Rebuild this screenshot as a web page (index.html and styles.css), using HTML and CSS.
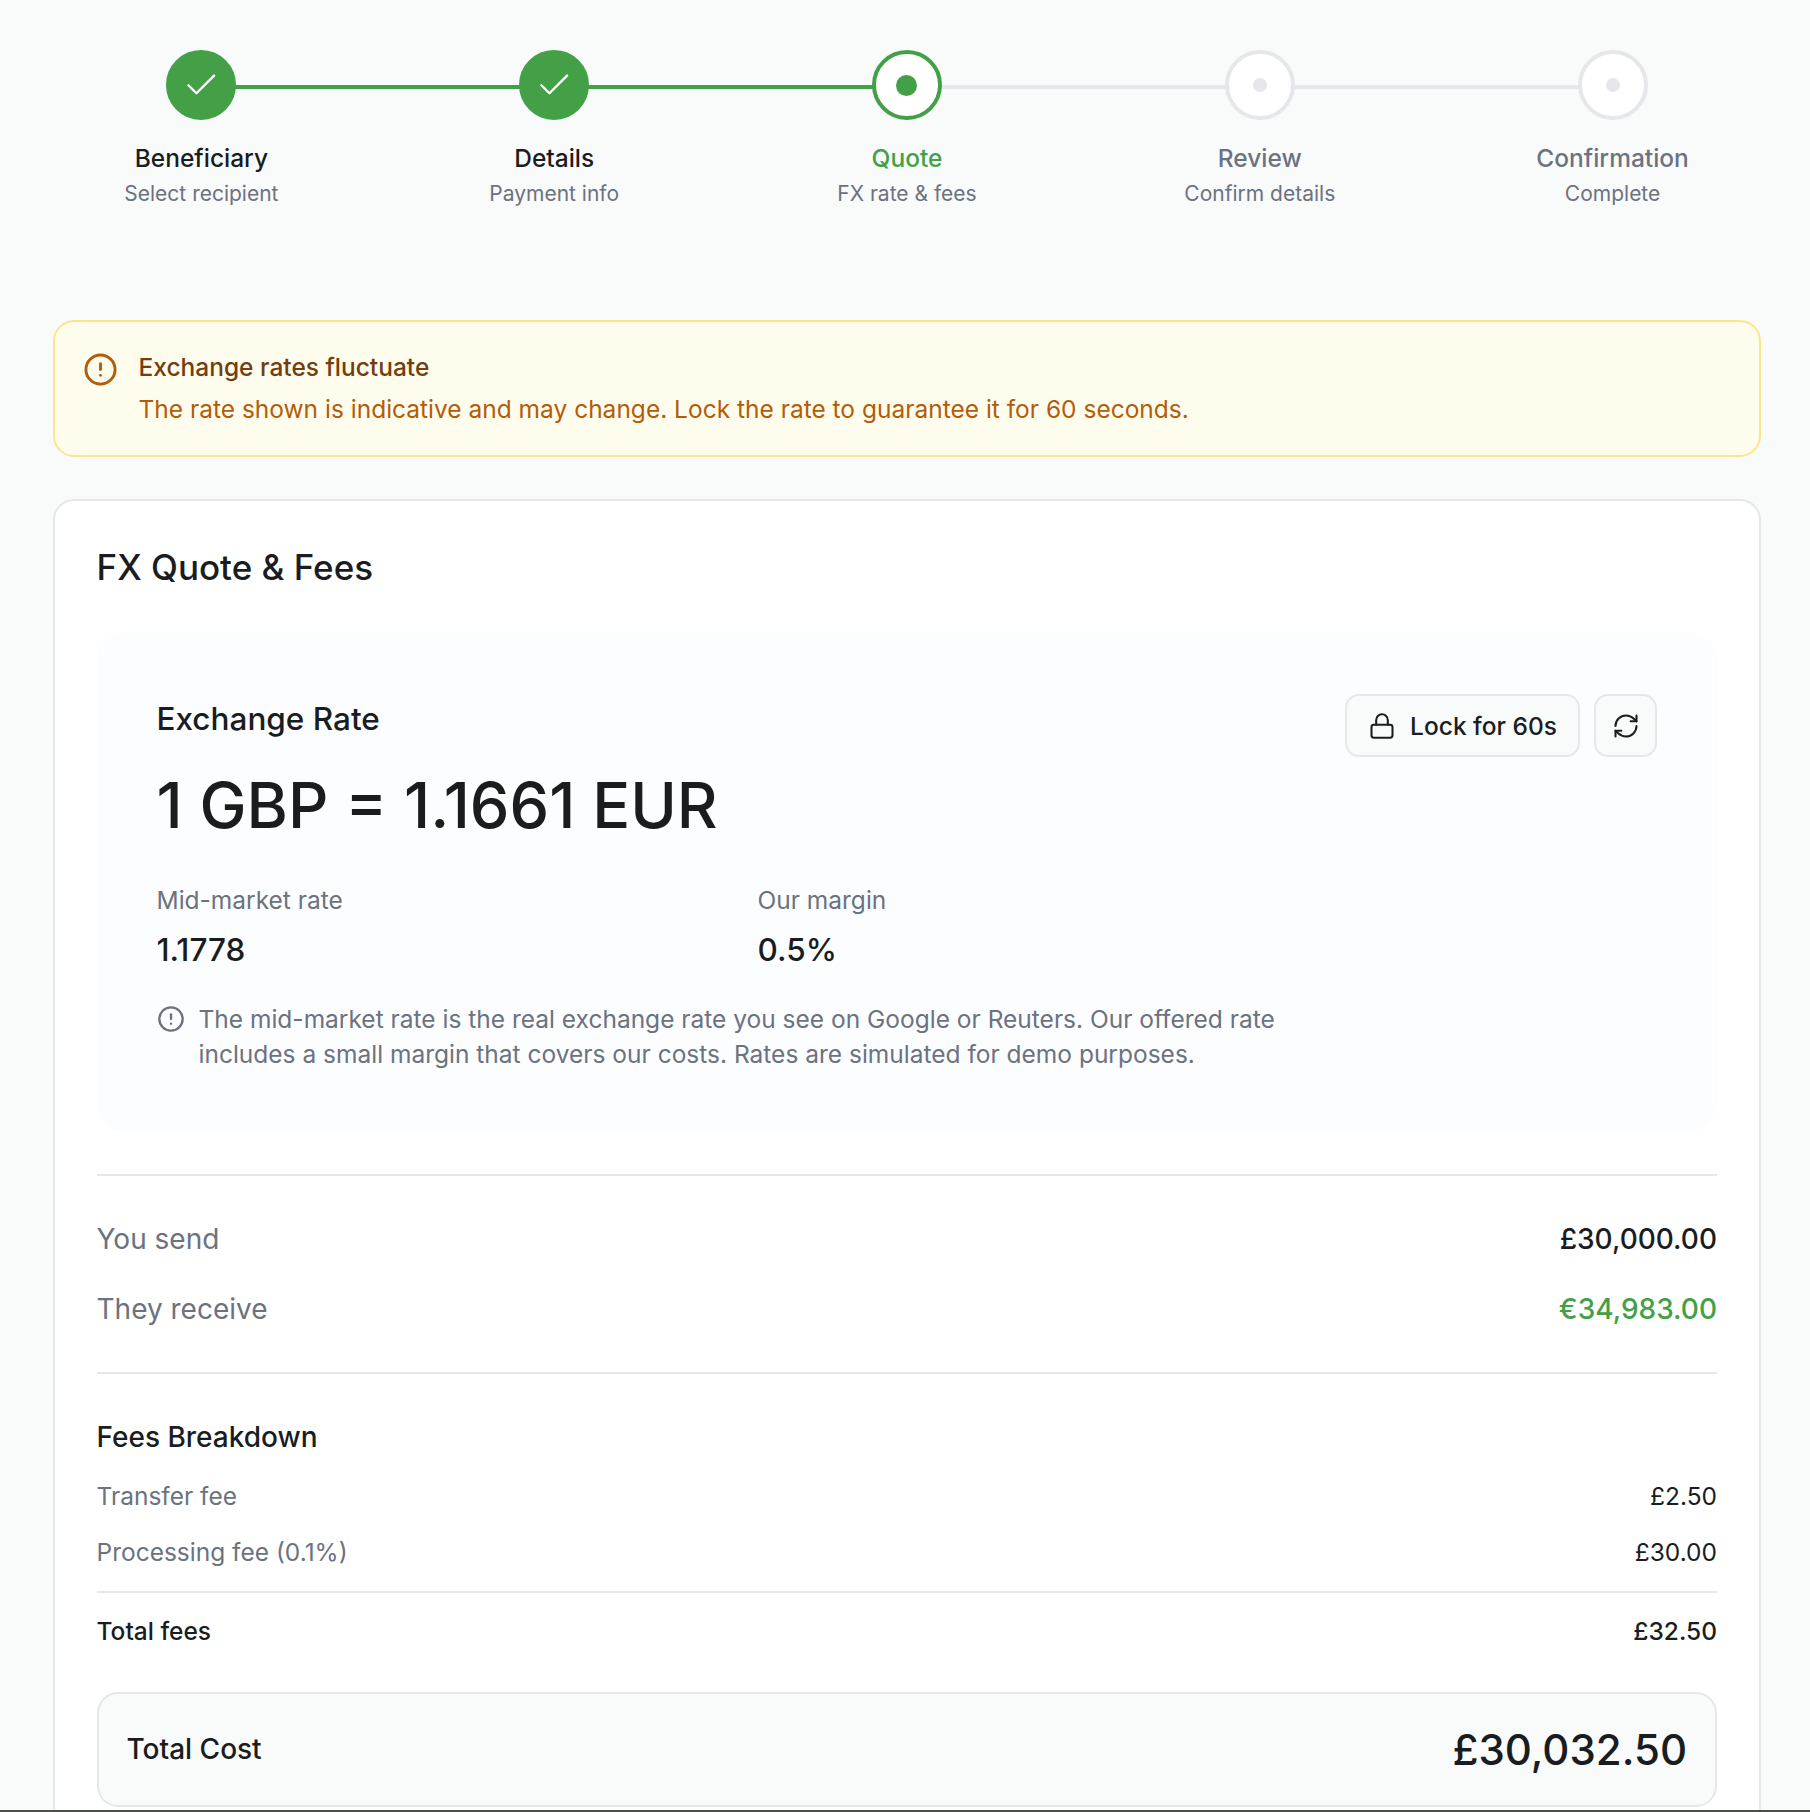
FILE: index.html
```html
<!DOCTYPE html>
<html>
<head>
  <title>FX Quote</title>
  <link rel="stylesheet" href="styles.css">
</head>
<body>
  <div class="stepper">
    <div class="step done">
      <div class="circle">
        <svg width="38.5" height="38.5" viewBox="0 0 24 24" fill="none" stroke="#fff" stroke-width="1.5" stroke-linecap="round" stroke-linejoin="round"><path d="M20 6 9 17l-5-5"/></svg>
      </div>
      <div class="step-label">Beneficiary</div>
      <div class="step-sub">Select recipient</div>
    </div>
    <div class="step done">
      <div class="circle">
        <svg width="38.5" height="38.5" viewBox="0 0 24 24" fill="none" stroke="#fff" stroke-width="1.5" stroke-linecap="round" stroke-linejoin="round"><path d="M20 6 9 17l-5-5"/></svg>
      </div>
      <div class="step-label">Details</div>
      <div class="step-sub">Payment info</div>
    </div>
    <div class="step current">
      <div class="circle"><span class="dot"></span></div>
      <div class="step-label">Quote</div>
      <div class="step-sub">FX rate &amp; fees</div>
    </div>
    <div class="step">
      <div class="circle"><span class="dot"></span></div>
      <div class="step-label">Review</div>
      <div class="step-sub">Confirm details</div>
    </div>
    <div class="step last">
      <div class="circle"><span class="dot"></span></div>
      <div class="step-label">Confirmation</div>
      <div class="step-sub">Complete</div>
    </div>
  </div>

  <div class="alert">
    <svg class="alert-icon" width="35" height="35" viewBox="0 0 24 24" fill="none" stroke="#b35c0a" stroke-width="2" stroke-linecap="round" stroke-linejoin="round"><circle cx="12" cy="12" r="10"/><path d="M12 8v4"/><path d="M12 16h.01"/></svg>
    <div>
      <div class="alert-title">Exchange rates fluctuate</div>
      <div class="alert-text">The rate shown is indicative and may change. Lock the rate to guarantee it for 60 seconds.</div>
    </div>
  </div>

  <div class="card">
    <h2>FX Quote &amp; Fees</h2>

    <div class="rate-box">
      <div class="rate-main">
        <div class="rate-title">Exchange Rate</div>
        <div class="rate-value">1 GBP = 1.1661 EUR</div>
        <div class="rate-cols">
          <div>
            <div class="col-label">Mid-market rate</div>
            <div class="col-value">1.1778</div>
          </div>
          <div>
            <div class="col-label">Our margin</div>
            <div class="col-value">0.5%</div>
          </div>
        </div>
        <div class="rate-note">
          <svg width="28" height="28" viewBox="0 0 24 24" fill="none" stroke="#6b7280" stroke-width="2" stroke-linecap="round" stroke-linejoin="round"><circle cx="12" cy="12" r="10"/><path d="M12 8v4"/><path d="M12 16h.01"/></svg>
          <p>The mid-market rate is the real exchange rate you see on Google or Reuters. Our offered rate includes a small margin that covers our costs. Rates are simulated for demo purposes.</p>
        </div>
      </div>
      <div class="rate-actions">
        <button class="btn">
          <svg width="28" height="28" viewBox="0 0 24 24" fill="none" stroke="#1a1d1f" stroke-width="1.75" stroke-linecap="round" stroke-linejoin="round"><rect x="3" y="11" width="18" height="11" rx="2"/><path d="M7 11V7a5 5 0 0 1 10 0v4"/></svg>
          Lock for 60s
        </button>
        <button class="btn btn-icon">
          <svg width="28" height="28" viewBox="0 0 24 24" fill="none" stroke="#1a1d1f" stroke-width="1.75" stroke-linecap="round" stroke-linejoin="round"><path d="M3 12a9 9 0 0 1 9-9 9.75 9.75 0 0 1 6.74 2.74L21 8"/><path d="M21 3v5h-5"/><path d="M21 12a9 9 0 0 1-9 9 9.75 9.75 0 0 1-6.74-2.74L3 16"/><path d="M8 16H3v5"/></svg>
        </button>
      </div>
    </div>

    <div class="amounts">
      <div class="row"><span class="muted">You send</span><span class="strong">£30,000.00</span></div>
      <div class="row"><span class="muted">They receive</span><span class="strong green">€34,983.00</span></div>
    </div>

    <div class="fees">
      <div class="fees-title">Fees Breakdown</div>
      <div class="fee-row"><span class="muted">Transfer fee</span><span>£2.50</span></div>
      <div class="fee-row"><span class="muted">Processing fee (0.1%)</span><span>£30.00</span></div>
      <div class="fee-total"><span>Total fees</span><span>£32.50</span></div>
    </div>

    <div class="total">
      <span class="total-label">Total Cost</span>
      <span class="total-value">£30,032.50</span>
    </div>
  </div>

  <div class="bottom-strip"></div>
</body>
</html>
```

FILE: styles.css
```css
* {
  box-sizing: border-box;
}

html, body {
  height: 1812px;
  overflow: hidden;
}

body {
  margin: 0;
  position: relative;
  font-family: Inter, "Liberation Sans", sans-serif;
  font-size: 24.5px;
  line-height: 35px;
  color: #1a1d1f;
  background-color: #f9fafa;
}

.stepper {
  display: flex;
  padding: 50px 21px 0 25px;
  height: 320px;
}

.step {
  flex: 1;
  display: flex;
  flex-direction: column;
  align-items: center;
  position: relative;
}

.step::after {
  content: "";
  position: absolute;
  top: 35px;
  left: 50%;
  width: 100%;
  height: 4px;
  background-color: #e5e7eb;
}

.step.done::after {
  background-color: #43a047;
}

.step.last::after {
  display: none;
}

.circle {
  width: 70px;
  height: 70px;
  border-radius: 50%;
  border: 4px solid #e5e7eb;
  background-color: #fff;
  display: flex;
  align-items: center;
  justify-content: center;
  position: relative;
  z-index: 1;
}

.done .circle {
  background-color: #43a047;
  border-color: #43a047;
}

.current .circle {
  border-color: #43a047;
}

.dot {
  width: 14px;
  height: 14px;
  border-radius: 50%;
  background-color: #e5e7eb;
}

.current .dot {
  width: 21px;
  height: 21px;
  background-color: #43a047;
}

.step-label {
  margin-top: 21px;
  font-weight: 500;
  color: #6b7280;
}

.done .step-label {
  color: #1a1d1f;
}

.current .step-label {
  color: #43a047;
}

.step-sub {
  margin-top: 3.5px;
  font-size: 21px;
  line-height: 28px;
  color: #6b7280;
}

.alert {
  display: flex;
  gap: 21px;
  margin: 0 49px 42px 52.5px;
  padding: 28px;
  border: 2px solid #fde68a;
  border-radius: 21px;
  background-color: #fefcec;
}

.alert-icon {
  flex-shrink: 0;
  margin-top: 2px;
}

.alert-title {
  margin-bottom: 7px;
  font-weight: 500;
  color: #733e0f;
}

.alert-text {
  color: #b35c0a;
}

.card {
  margin: 0 49px 0 52.5px;
  padding: 42px;
  border: 2px solid #e5e7eb;
  border-radius: 21px;
  background-color: #fff;
}

h2 {
  margin: 0 0 40px;
  font-size: 35px;
  line-height: 49px;
  font-weight: 500;
}

.rate-box {
  display: flex;
  justify-content: space-between;
  padding: 62px 60px 60px;
  border-radius: 28px;
  background-color: #fcfdff;
}

.rate-main {
  flex: 1;
}

.rate-title {
  font-size: 31.5px;
  line-height: 49px;
  font-weight: 500;
}

.rate-value {
  margin-top: 27px;
  font-size: 63px;
  line-height: 70px;
  font-weight: 500;
}

.rate-cols {
  display: grid;
  grid-template-columns: 601px 1fr;
  margin-top: 43px;
}

.col-label {
  color: #6b7280;
}

.col-value {
  margin-top: 7px;
  font-size: 31.5px;
  line-height: 49px;
  font-weight: 500;
}

.rate-note {
  display: flex;
  gap: 14px;
  margin-top: 28px;
  color: #6b7280;
}

.rate-note svg {
  flex-shrink: 0;
  margin-top: 3px;
}

.rate-note p {
  margin: 0;
  max-width: 1120px;
}

.rate-actions {
  display: flex;
  gap: 14px;
  flex-shrink: 0;
}

.btn {
  display: flex;
  align-items: center;
  gap: 14px;
  height: 63px;
  padding: 0 21px;
  border: 2px solid #e5e7eb;
  border-radius: 14px;
  background-color: #f9fafa;
  font-family: inherit;
  font-size: 24.5px;
  font-weight: 500;
  color: #1a1d1f;
  white-space: nowrap;
}

.btn-icon {
  width: 63px;
  padding: 0;
  justify-content: center;
}

.amounts {
  margin-top: 42px;
  padding: 42px 0;
  border-top: 2px solid #e5e7eb;
  border-bottom: 2px solid #e5e7eb;
}

.row {
  display: flex;
  justify-content: space-between;
  font-size: 28px;
  line-height: 42px;
  margin-bottom: 28px;
}

.row:last-child {
  margin-bottom: 0;
}

.muted {
  color: #6b7280;
}

.strong {
  font-weight: 500;
}

.green {
  color: #43a047;
}

.fees {
  margin-top: 42px;
}

.fees-title {
  font-size: 28px;
  line-height: 42px;
  font-weight: 500;
  margin-bottom: 21px;
}

.fee-row {
  display: flex;
  justify-content: space-between;
  margin-bottom: 21px;
}

.fee-total {
  display: flex;
  justify-content: space-between;
  padding-top: 21px;
  border-top: 2px solid #e5e7eb;
  font-weight: 500;
}

.total {
  display: flex;
  justify-content: space-between;
  align-items: center;
  margin-top: 43px;
  height: 115px;
  padding: 0 28px;
  border: 2px solid #e5e7eb;
  border-radius: 21px;
  background-color: #f9fafa;
}

.total-label {
  font-size: 28px;
  font-weight: 500;
}

.total-value {
  font-size: 42px;
  line-height: 56px;
  font-weight: 500;
}

.bottom-strip {
  position: absolute;
  left: 0;
  right: 0;
  bottom: 0;
  height: 2px;
  background-color: #4a4f4a;
}
```
